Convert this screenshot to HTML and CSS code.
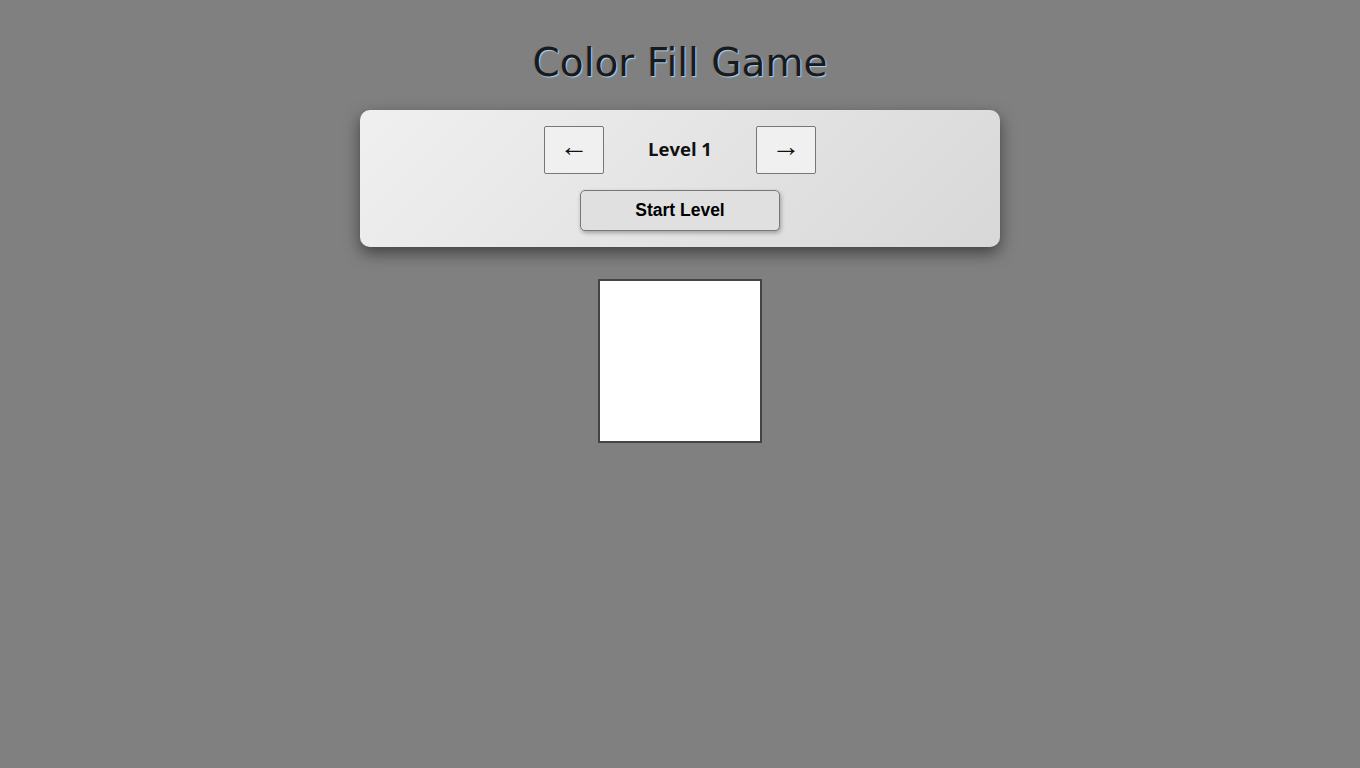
FILE: index.html
```html
<!DOCTYPE html>
<html>
<head>
<meta charset="utf-8">
<link rel="stylesheet" href="styles.css">
</head>
<body>
<div class="page">
  <h1 class="title">Color Fill Game</h1>
  <div class="panel">
    <div class="nav">
      <button class="arrow">&larr;</button>
      <span class="level">Level 1</span>
      <button class="arrow">&rarr;</button>
    </div>
    <button class="start">Start Level</button>
  </div>
  <div class="board"></div>
</div>
</body>
</html>
```
FILE: styles.css
```css
html, body {
  margin: 0;
  padding: 0;
  background: #808080;
  height: 100%;
}
.page {
  display: flex;
  flex-direction: column;
  align-items: center;
  padding-top: 41px;
}
.title {
  margin: 0;
  font-family: "DejaVu Sans", sans-serif;
  font-weight: normal;
  font-size: 39px;
  line-height: 44px;
  color: #1a1a1a;
  text-shadow: 1px 1px 1px #a8d4f4, -1px 0 0 rgba(120,80,40,0.25);
}
.panel {
  margin-top: 25px;
  width: 640px;
  box-sizing: border-box;
  padding: 16px 0;
  border-radius: 10px;
  background: linear-gradient(135deg, #f0f0f0, #d8d8d8);
  box-shadow: 0 6px 16px rgba(0,0,0,0.5);
  display: flex;
  flex-direction: column;
  align-items: center;
  gap: 16px;
}
.nav {
  display: flex;
  align-items: center;
}
.arrow {
  width: 60px;
  height: 48px;
  box-sizing: border-box;
  border: 1px solid #777;
  border-radius: 2px;
  background: #f0f0f0;
  font-family: "Liberation Sans", sans-serif;
  font-size: 29px;
  line-height: 1;
  color: #111;
  padding: 0 0 8px 0;
}
.level {
  width: 152px;
  text-align: center;
  font-family: "Open Sans", sans-serif;
  font-weight: 700;
  font-size: 18.5px;
  line-height: 24px;
  padding-bottom: 2px;
  color: #111;
}
.start {
  width: 200px;
  height: 41px;
  box-sizing: border-box;
  border: 1px solid #777;
  border-radius: 5px;
  background: #e0e0e0;
  box-shadow: 1px 2px 4px rgba(0,0,0,0.3);
  font-family: "Liberation Sans", sans-serif;
  font-weight: 700;
  font-size: 17.5px;
  color: #000;
  padding: 0;
}
.board {
  margin-top: 32px;
  width: 160px;
  height: 160px;
  border: 2px solid #444;
  background: #fff;
}
```
